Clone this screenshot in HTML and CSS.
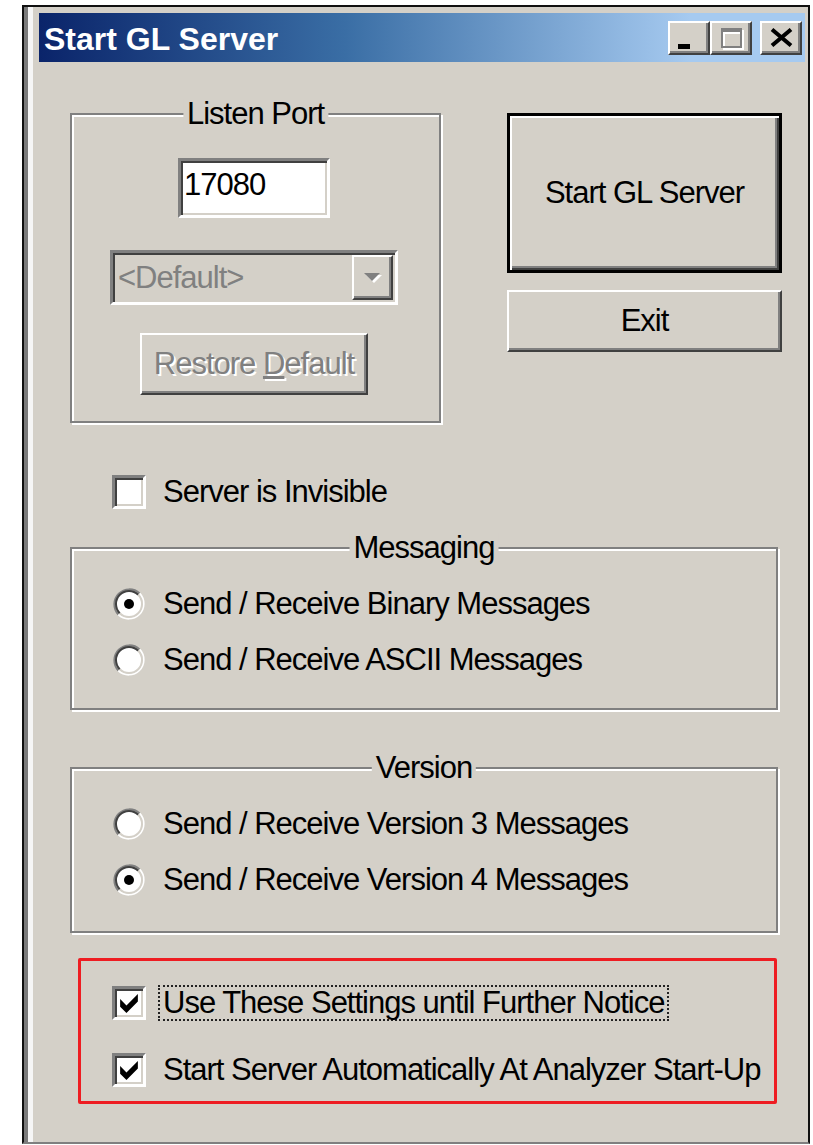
FILE: index.html
```html
<!DOCTYPE html>
<html lang="en">
<head>
<meta charset="utf-8">
<title>Start GL Server</title>
<link rel="stylesheet" href="styles.css">
</head>
<body>
<div class="window">
  <div class="titlebar">
    <span class="title">Start GL Server</span>
    <div class="caption-buttons">
      <div class="cap-btn min"><span class="min-bar"></span></div>
      <div class="cap-btn max"><span class="max-box"></span></div>
      <div class="cap-btn close">
        <svg width="23" height="19" viewBox="0 0 23 19"><path d="M2 1.5L21 17.5M21 1.5L2 17.5" stroke="#000" stroke-width="4" fill="none"/></svg>
      </div>
    </div>
  </div>

  <div class="client">
    <div class="top-row">
      <section class="group port-group">
        <h2 class="group-label">Listen Port</h2>
        <div class="edit">17080</div>
        <div class="combo">
          <span class="combo-text">&lt;Default&gt;</span>
          <span class="combo-btn">
            <svg width="20" height="11" viewBox="0 0 20 11"><polygon points="3,3 19,3 11,11" fill="#fff"/><polygon points="1,1 17,1 9,9" fill="#808080"/></svg>
          </span>
        </div>
        <div class="btn disabled restore"><span>Restore <u>D</u>efault</span></div>
      </section>
      <div class="actions">
        <div class="btn default start">Start GL Server</div>
        <div class="btn exit">Exit</div>
      </div>
    </div>

    <div class="option invisible">
      <span class="checkbox"></span>
      <span>Server is Invisible</span>
    </div>

    <section class="group wide messaging">
      <h2 class="group-label">Messaging</h2>
      <div class="option">
        <svg class="radio" viewBox="0 0 34 34" width="34" height="34">
          <circle cx="17" cy="17" r="13" fill="#fff"/>
          <path d="M6.4 27.6A15 15 0 0 1 27.6 6.4" stroke="#808080" stroke-width="2" fill="none"/>
          <path d="M27.6 6.4A15 15 0 0 1 6.4 27.6" stroke="#fff" stroke-width="2" fill="none"/>
          <path d="M7.8 26.2A13 13 0 0 1 26.2 7.8" stroke="#404040" stroke-width="2" fill="none"/>
          <path d="M26.2 7.8A13 13 0 0 1 7.8 26.2" stroke="#d4d0c8" stroke-width="2" fill="none"/>
          <circle cx="17" cy="17" r="5" fill="#000"/>
        </svg>
        <span>Send / Receive Binary Messages</span>
      </div>
      <div class="option">
        <svg class="radio" viewBox="0 0 34 34" width="34" height="34">
          <circle cx="17" cy="17" r="13" fill="#fff"/>
          <path d="M6.4 27.6A15 15 0 0 1 27.6 6.4" stroke="#808080" stroke-width="2" fill="none"/>
          <path d="M27.6 6.4A15 15 0 0 1 6.4 27.6" stroke="#fff" stroke-width="2" fill="none"/>
          <path d="M7.8 26.2A13 13 0 0 1 26.2 7.8" stroke="#404040" stroke-width="2" fill="none"/>
          <path d="M26.2 7.8A13 13 0 0 1 7.8 26.2" stroke="#d4d0c8" stroke-width="2" fill="none"/>
        </svg>
        <span>Send / Receive ASCII Messages</span>
      </div>
    </section>

    <section class="group wide version">
      <h2 class="group-label">Version</h2>
      <div class="option">
        <svg class="radio" viewBox="0 0 34 34" width="34" height="34">
          <circle cx="17" cy="17" r="13" fill="#fff"/>
          <path d="M6.4 27.6A15 15 0 0 1 27.6 6.4" stroke="#808080" stroke-width="2" fill="none"/>
          <path d="M27.6 6.4A15 15 0 0 1 6.4 27.6" stroke="#fff" stroke-width="2" fill="none"/>
          <path d="M7.8 26.2A13 13 0 0 1 26.2 7.8" stroke="#404040" stroke-width="2" fill="none"/>
          <path d="M26.2 7.8A13 13 0 0 1 7.8 26.2" stroke="#d4d0c8" stroke-width="2" fill="none"/>
        </svg>
        <span>Send / Receive Version 3 Messages</span>
      </div>
      <div class="option">
        <svg class="radio" viewBox="0 0 34 34" width="34" height="34">
          <circle cx="17" cy="17" r="13" fill="#fff"/>
          <path d="M6.4 27.6A15 15 0 0 1 27.6 6.4" stroke="#808080" stroke-width="2" fill="none"/>
          <path d="M27.6 6.4A15 15 0 0 1 6.4 27.6" stroke="#fff" stroke-width="2" fill="none"/>
          <path d="M7.8 26.2A13 13 0 0 1 26.2 7.8" stroke="#404040" stroke-width="2" fill="none"/>
          <path d="M26.2 7.8A13 13 0 0 1 7.8 26.2" stroke="#d4d0c8" stroke-width="2" fill="none"/>
          <circle cx="17" cy="17" r="5" fill="#000"/>
        </svg>
        <span>Send / Receive Version 4 Messages</span>
      </div>
    </section>

    <div class="highlight">
      <div class="option">
        <span class="checkbox">
          <svg width="18" height="19" viewBox="0 0 7 7.5"><polygon points="0,2 2.5,4.5 7,0 7,3 2.5,7.5 0,5" fill="#000"/></svg>
        </span>
        <span class="focus">Use These Settings until Further Notice</span>
      </div>
      <div class="option">
        <span class="checkbox">
          <svg width="18" height="19" viewBox="0 0 7 7.5"><polygon points="0,2 2.5,4.5 7,0 7,3 2.5,7.5 0,5" fill="#000"/></svg>
        </span>
        <span>Start Server Automatically At Analyzer Start-Up</span>
      </div>
    </div>
  </div>
</div>
</body>
</html>
```

FILE: styles.css
```css
* {
  box-sizing: border-box;
}

html,
body {
  margin: 0;
  padding: 0;
}

body {
  width: 813px;
  height: 1145px;
  overflow: hidden;
  background: #fff;
  font-family: "Liberation Sans", Arial, sans-serif;
  font-size: 31px;
  letter-spacing: -1px;
  color: #000;
}

/* Window frame */
.window {
  margin: 5px 0 0 22px;
  width: 788px;
  height: 1139px;
  background: #d4d0c8;
  border: 2px solid #101010;
  border-bottom-color: #7f7f7f;
  padding: 6px 3px 0 15px;
  box-shadow: inset 4px 0 0 #7a7a7a, inset 9px 0 0 #f6f6f6;
}

/* Caption bar */
.titlebar {
  display: flex;
  align-items: center;
  height: 49px;
  padding: 0 3px 0 5px;
  background: linear-gradient(to right, #0a246a 0%, #3a6ea5 40%, #a6caf0 85%, #a6caf0 100%);
}

.title {
  flex: 1;
  padding-top: 4px;
  color: #fff;
  font-weight: bold;
  font-size: 32px;
  letter-spacing: 0;
  white-space: nowrap;
}

.caption-buttons {
  display: flex;
  align-items: center;
}

.cap-btn {
  width: 42px;
  height: 34px;
  display: flex;
  align-items: center;
  justify-content: center;
  background: #d4d0c8;
  border: 2px solid;
  border-color: #fff #404040 #404040 #fff;
  box-shadow: inset -2px -2px 0 #808080;
}

.cap-btn.min {
  align-items: flex-end;
  justify-content: flex-start;
  padding: 0 0 4px 8px;
}

.min-bar {
  width: 12px;
  height: 5px;
  background: #000;
}

.max-box {
  width: 21px;
  height: 20px;
  border: 2px solid #808080;
  border-top-width: 4px;
  box-shadow: 2px 2px 0 #fff, inset 2px 2px 0 #fff;
}

.cap-btn.close {
  margin-left: 8px;
}

/* Client area */
.client {
  padding: 51px 0 0 31px;
}

.top-row {
  display: flex;
  align-items: flex-start;
}

/* Etched group boxes */
.group {
  position: relative;
  border: 2px solid #808080;
  box-shadow: inset 2px 2px 0 #fff, 2px 2px 0 #fff;
}

.group-label {
  position: absolute;
  top: -16px;
  left: 50%;
  transform: translateX(-50%);
  margin: 0;
  padding: 0 4px;
  background: #d4d0c8;
  font: inherit;
  line-height: 30px;
  white-space: nowrap;
}

.port-group {
  width: 371px;
  height: 310px;
  display: flex;
  flex-direction: column;
  align-items: center;
  padding: 43px 3px 0 0;
}

.edit {
  width: 152px;
  height: 60px;
  display: flex;
  align-items: center;
  padding: 0 0 6px 3px;
  background: #fff;
  border: 3px solid;
  border-color: #808080 #fff #fff #808080;
  box-shadow: inset 2px 2px 0 #404040, inset -2px -2px 0 #d4d0c8;
}

.combo {
  width: 288px;
  height: 55px;
  margin-top: 32px;
  display: flex;
  align-items: stretch;
  padding: 2px;
  background: #d4d0c8;
  border: 3px solid;
  border-color: #808080 #fff #fff #808080;
  box-shadow: inset 2px 2px 0 #404040, inset -2px -2px 0 #d4d0c8;
}

.combo-text {
  flex: 1;
  display: flex;
  align-items: center;
  padding-left: 3px;
  color: #808080;
}

.combo-btn {
  width: 41px;
  display: flex;
  align-items: center;
  justify-content: center;
  background: #d4d0c8;
  border: 2px solid;
  border-color: #fff #404040 #404040 #fff;
  box-shadow: inset -2px -2px 0 #808080;
}

/* Push buttons */
.btn {
  display: flex;
  align-items: center;
  justify-content: center;
  background: #d4d0c8;
  border: 2px solid;
  border-color: #fff #404040 #404040 #fff;
  box-shadow: inset -2px -2px 0 #808080;
  white-space: nowrap;
}

.btn.default {
  border: 3px solid #000;
  box-shadow: inset 2px 2px 0 #fff, inset -2px -2px 0 #404040, inset -4px -4px 0 #808080;
}

.btn.disabled {
  color: #808080;
  text-shadow: 2px 2px 0 #fff;
}

.restore {
  width: 228px;
  height: 62px;
  margin-top: 28px;
}

.actions {
  width: 275px;
  margin-left: 66px;
  display: flex;
  flex-direction: column;
  gap: 17px;
}

.start {
  height: 160px;
}

.exit {
  height: 62px;
}

/* Check boxes and radio buttons */
.option {
  display: flex;
  align-items: center;
  gap: 17px;
  height: 40px;
  white-space: nowrap;
}

.invisible {
  margin: 49px 0 0 42px;
}

.checkbox {
  width: 34px;
  height: 34px;
  flex: none;
  display: flex;
  align-items: center;
  justify-content: center;
  background: #fff;
  border: 3px solid;
  border-color: #808080 #fff #fff #808080;
  box-shadow: inset 2px 2px 0 #404040, inset -2px -2px 0 #d4d0c8;
}

.radio {
  flex: none;
  display: block;
}

.wide {
  width: 708px;
  display: flex;
  flex-direction: column;
  gap: 16px;
  padding-left: 40px;
}

.messaging {
  height: 163px;
  margin-top: 35px;
  padding-top: 35px;
}

.version {
  height: 166px;
  margin-top: 57px;
  padding-top: 35px;
}

.highlight {
  width: 699px;
  margin: 25px 0 0 8px;
  padding: 22px 0 11px 31px;
  border: 3px solid #ee1c22;
  border-radius: 2px;
  display: flex;
  flex-direction: column;
  gap: 27px;
}

.focus {
  margin-left: -5px;
  padding: 0 3px;
  line-height: 32px;
  border: 2px dotted #222;
}
```
